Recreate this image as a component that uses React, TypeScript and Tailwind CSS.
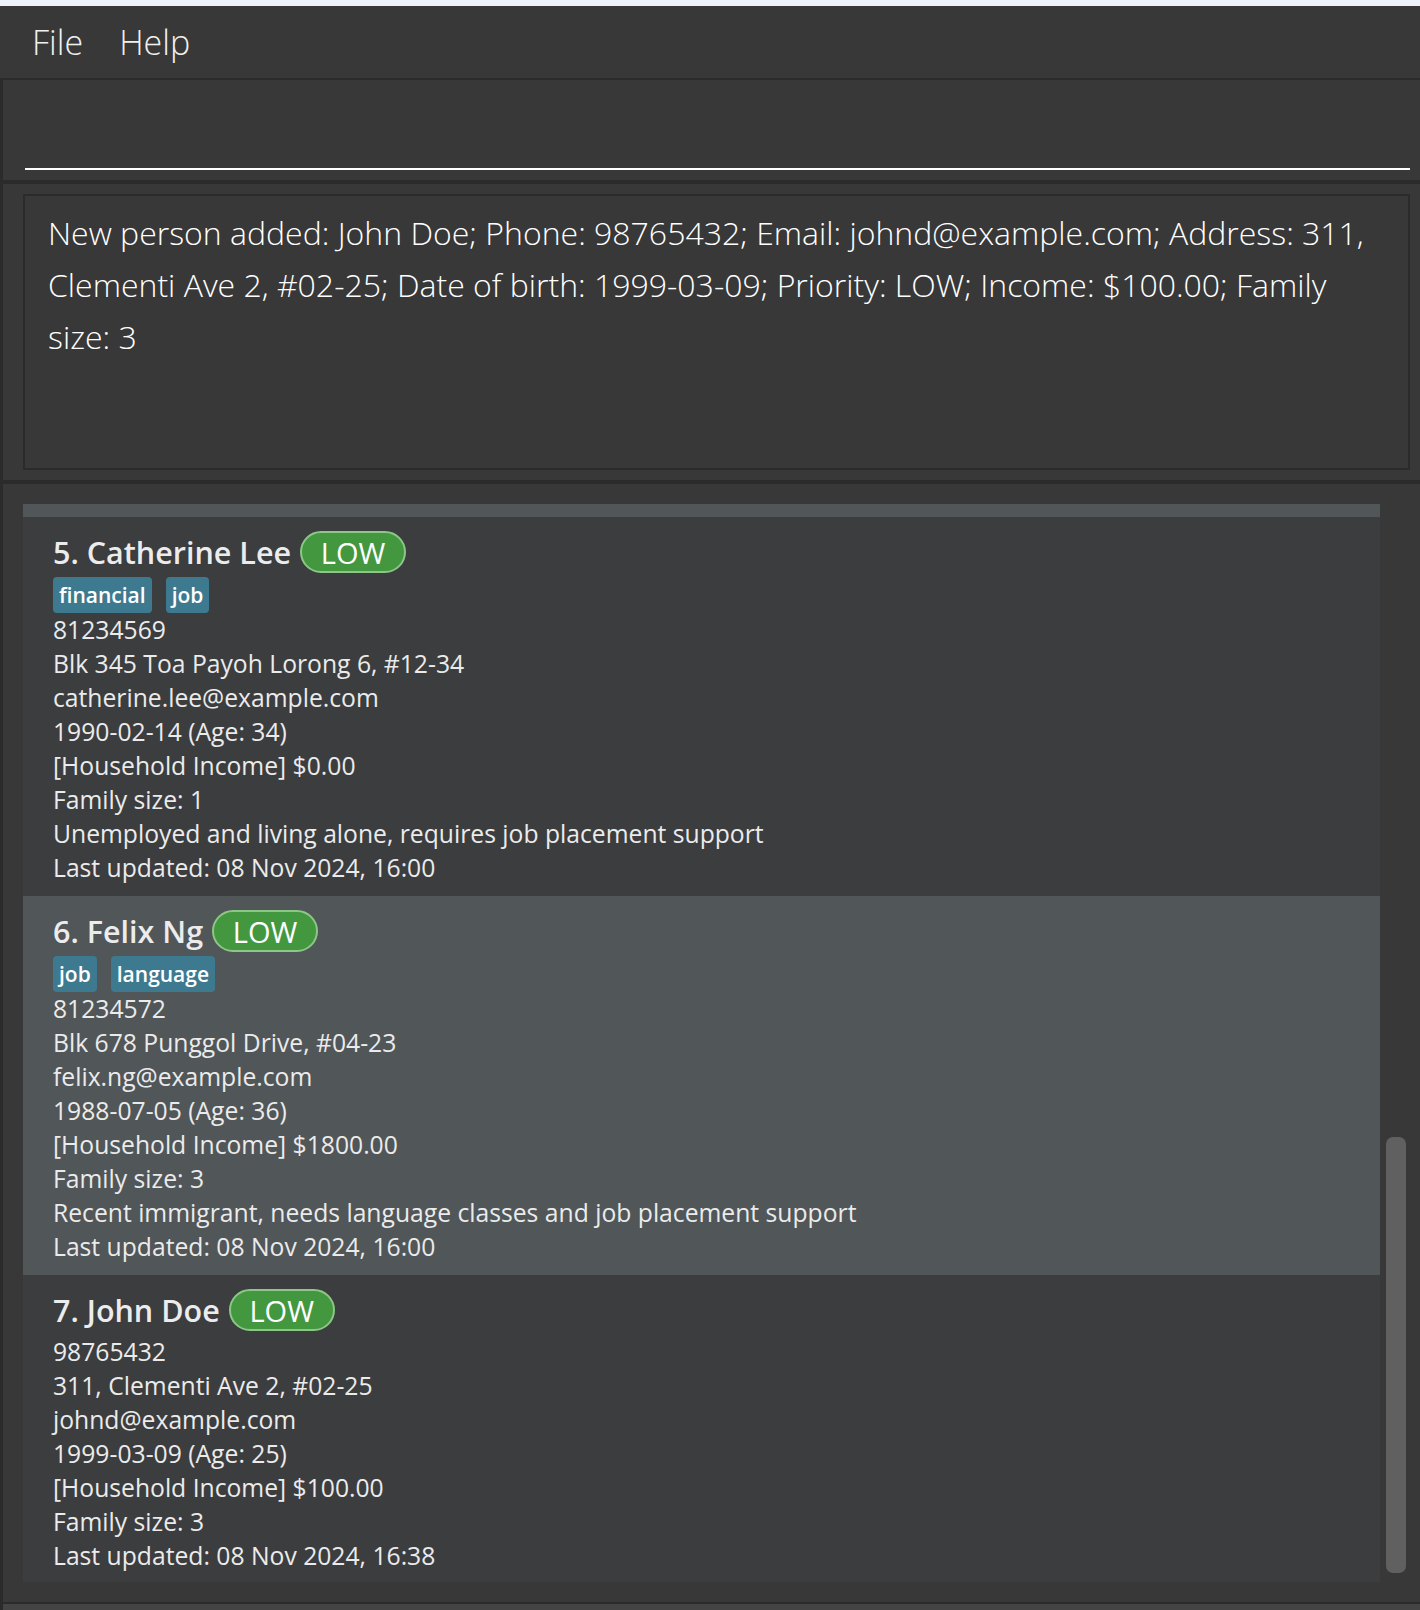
import React from "react";

type Person = {
  idx: number;
  name: string;
  tags: string[];
  lines: string[];
  alt: boolean;
};

const people: Person[] = [
  {
    idx: 5,
    name: "Catherine Lee",
    tags: ["financial", "job"],
    lines: [
      "81234569",
      "Blk 345 Toa Payoh Lorong 6, #12-34",
      "catherine.lee@example.com",
      "1990-02-14 (Age: 34)",
      "[Household Income] $0.00",
      "Family size: 1",
      "Unemployed and living alone, requires job placement support",
      "Last updated: 08 Nov 2024, 16:00",
    ],
    alt: false,
  },
  {
    idx: 6,
    name: "Felix Ng",
    tags: ["job", "language"],
    lines: [
      "81234572",
      "Blk 678 Punggol Drive, #04-23",
      "felix.ng@example.com",
      "1988-07-05 (Age: 36)",
      "[Household Income] $1800.00",
      "Family size: 3",
      "Recent immigrant, needs language classes and job placement support",
      "Last updated: 08 Nov 2024, 16:00",
    ],
    alt: true,
  },
  {
    idx: 7,
    name: "John Doe",
    tags: [],
    lines: [
      "98765432",
      "311, Clementi Ave 2, #02-25",
      "johnd@example.com",
      "1999-03-09 (Age: 25)",
      "[Household Income] $100.00",
      "Family size: 3",
      "Last updated: 08 Nov 2024, 16:38",
    ],
    alt: false,
  },
];

function Card({ p }: { p: Person }) {
  return (
    <div
      className={
        (p.alt ? "bg-[#515658]" : "bg-[#3c3d3f]") +
        " pl-[30px] pt-[14px] pb-[11px] flex flex-col"
      }
    >
      <div className="h-[42px] flex items-center gap-[9px] mb-[4px]">
        <span className="text-[30.5px] font-semibold text-[#ececec] leading-none">
          {p.idx}. {p.name}
        </span>
        <span className="h-[42px] w-[106px] rounded-full border-2 border-[#8cc787] bg-[#43973f] flex items-center justify-center text-[29px] text-white leading-none">
          LOW
        </span>
      </div>
      {p.tags.length > 0 && (
        <div className="h-[36px] flex gap-[14px]">
          {p.tags.map((t) => (
            <span
              key={t}
              className="h-[36px] px-[6px] rounded-[4px] bg-[#3e7a8f] text-white text-[21px] font-semibold flex items-center leading-none"
            >
              {t}
            </span>
          ))}
        </div>
      )}
      {p.lines.map((l, i) => (
        <div key={i} className="h-[34px] leading-[34px] text-[24.7px] text-[#ebebeb] whitespace-nowrap">
          {l}
        </div>
      ))}
    </div>
  );
}

export default function App() {
  return (
    <div className="w-[1420px] h-[1610px] bg-[#383838] flex flex-col font-['Open_Sans',sans-serif] overflow-hidden">
      <div className="h-[6px] bg-[#eef2fa]" />
      <div className="h-[72px] flex items-center pl-[32px] gap-[36px] text-[34px] font-light text-[#f0f0f0]">
        <span>File</span>
        <span>Help</span>
      </div>
      <div className="flex-1 flex flex-col border-l-[3px] border-[#2b2b2b]">
        {/* command box */}
        <div className="h-[102px] border-t-2 border-[#2b2b2b] pl-[22px] pr-[10px] flex flex-col justify-end pb-[10px]">
          <div className="h-[2px] bg-white" />
        </div>
        <div className="h-[4px] bg-[#2b2b2b]" />
        {/* result display */}
        <div className="h-[296px] pt-[10px] pl-[20px] pr-[10px] pb-[10px] flex">
          <div className="flex-1 border-2 border-[#2b2b2b] bg-[#383838] pl-[23px] pr-[20px] pt-[11px] text-[32px] leading-[52px] font-light text-white">
            New person added: John Doe; Phone: 98765432; Email: johnd@example.com; Address: 311, Clementi Ave 2, #02-25; Date of birth: 1999-03-09; Priority: LOW; Income: $100.00; Family size: 3
          </div>
        </div>
        <div className="h-[4px] bg-[#2b2b2b]" />
        {/* list */}
        <div className="h-[1118px] pt-[20px] pb-[20px] pl-[20px] flex">
          <div className="w-[1357px] flex flex-col overflow-hidden">
            <div className="h-[13px] bg-[#515658] shrink-0" />
            {people.map((p) => (
              <Card key={p.idx} p={p} />
            ))}
          </div>
          <div className="flex-1 flex justify-center pt-[633px] pb-[9px] pl-[6px] pr-[14px]">
            <div className="w-[20px] h-full rounded-[7px] bg-[#606060]" />
          </div>
        </div>
        <div className="h-[2px] bg-[#2b2b2b]" />
        <div className="flex-1 bg-[#444444]" />
      </div>
    </div>
  );
}
